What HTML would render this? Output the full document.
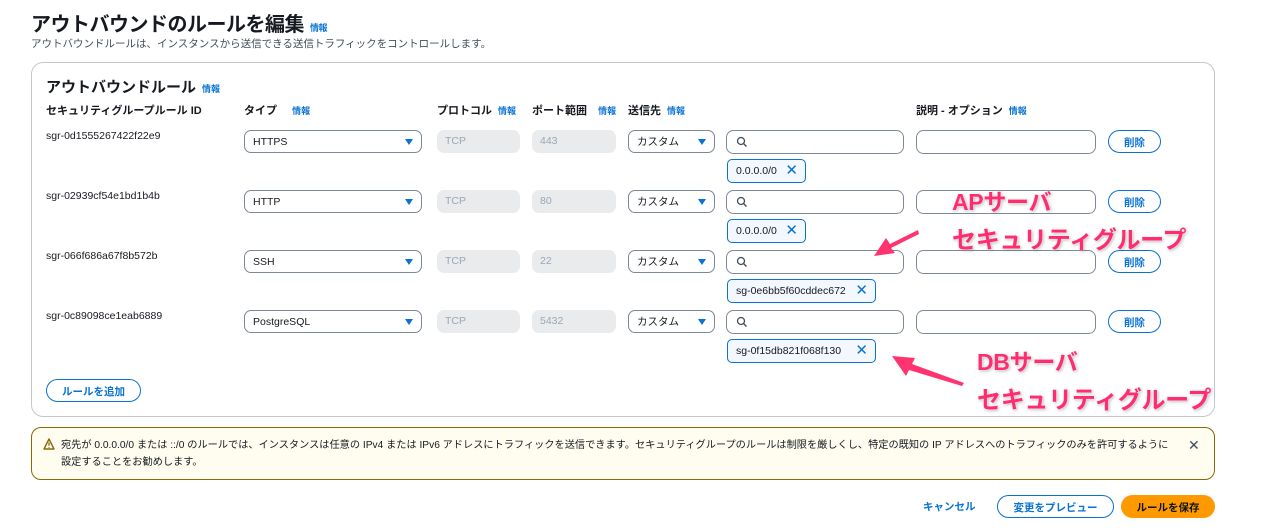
<!DOCTYPE html>
<html><head><meta charset="utf-8"><style>
*{box-sizing:border-box;margin:0;padding:0}
body{width:1271px;height:530px;background:#fff;font-family:"Liberation Sans","Noto Sans CJK JP",sans-serif;color:#16191f;position:relative;overflow:hidden}
.a{position:absolute}
.info{color:#0972d3;font-size:9px;font-weight:bold;margin-left:6px}
h1{position:absolute;left:31px;top:8px;font-size:20px;font-weight:bold;letter-spacing:-0.5px}
.sub{left:31px;top:36px;font-size:10.5px;color:#414d5c}
.box{left:31px;top:62px;width:1184px;height:355px;border:1px solid #c6c6cd;border-radius:12px}
.hd{font-size:11px;font-weight:bold;top:102px}
.id{font-size:10.5px;left:46px}
.sel{height:23px;border:1px solid #7d8998;border-radius:7px;font-size:10.5px;padding:5px 8px;line-height:12px}
.tri{position:absolute;right:8px;top:8px;width:0;height:0;border-left:4px solid transparent;border-right:4px solid transparent;border-top:6px solid #0972d3}
.dis{height:23px;background:#e9ebed;border-radius:7px;font-size:10.5px;color:#9ba7b6;padding:5px 8px;line-height:12px}
.btn{height:23px;border:1.5px solid #0972d3;border-radius:12px;color:#0972d3;font-size:10.5px;font-weight:bold;text-align:center;padding-top:4px}
.chip{height:24px;border:1px solid #0972d3;border-radius:5px;background:#f2f8fd;font-size:10.5px;padding:5px 8px;left:727px}
.chip b{color:#0972d3;font-weight:normal;font-size:15px;position:absolute;right:7px;top:1px}
.pk{color:#ff2d6f;font-weight:bold;text-shadow:0 0 2px #fff,1px 1px 3px rgba(0,0,0,.35);letter-spacing:-0.3px}
</style></head><body>
<h1>アウトバウンドのルールを編集<span class="info">情報</span></h1>
<div class="a sub">アウトバウンドルールは、インスタンスから送信できる送信トラフィックをコントロールします。</div>
<div class="a box"></div>
<div class="a" style="left:46px;top:76px;font-size:15px;font-weight:bold">アウトバウンドルール<span class="info">情報</span></div>
<div class="a hd" style="left:46px">セキュリティグループルール ID</div>
<div class="a hd" style="left:244px">タイプ <span class="info" style="margin-left:12px">情報</span></div>
<div class="a hd" style="left:437px">プロトコル<span class="info">情報</span></div>
<div class="a hd" style="left:532px">ポート範囲 <span class="info" style="margin-left:8px">情報</span></div>
<div class="a hd" style="left:628px">送信先<span class="info">情報</span></div>
<div class="a hd" style="left:916px">説明 - オプション<span class="info">情報</span></div>

<div class="a id" style="top:130px">sgr-0d1555267422f22e9</div>
<div class="a id" style="top:190px">sgr-02939cf54e1bd1b4b</div>
<div class="a id" style="top:250px">sgr-066f686a67f8b572b</div>
<div class="a id" style="top:310px">sgr-0c89098ce1eab6889</div>

<div class="a sel" style="left:244px;top:130px;width:178px">HTTPS<i class="tri"></i></div>
<div class="a sel" style="left:244px;top:190px;width:178px">HTTP<i class="tri"></i></div>
<div class="a sel" style="left:244px;top:250px;width:178px">SSH<i class="tri"></i></div>
<div class="a sel" style="left:244px;top:310px;width:178px">PostgreSQL<i class="tri"></i></div>

<div class="a dis" style="left:437px;top:130px;width:83px">TCP</div>
<div class="a dis" style="left:437px;top:190px;width:83px">TCP</div>
<div class="a dis" style="left:437px;top:250px;width:83px">TCP</div>
<div class="a dis" style="left:437px;top:310px;width:83px">TCP</div>

<div class="a dis" style="left:532px;top:130px;width:84px">443</div>
<div class="a dis" style="left:532px;top:190px;width:84px">80</div>
<div class="a dis" style="left:532px;top:250px;width:84px">22</div>
<div class="a dis" style="left:532px;top:310px;width:84px">5432</div>

<div class="a sel" style="left:628px;top:130px;width:87px">カスタム<i class="tri"></i></div>
<div class="a sel" style="left:628px;top:190px;width:87px">カスタム<i class="tri"></i></div>
<div class="a sel" style="left:628px;top:250px;width:87px">カスタム<i class="tri"></i></div>
<div class="a sel" style="left:628px;top:310px;width:87px">カスタム<i class="tri"></i></div>

<svg class="a" style="left:0;top:0" width="1271" height="530">
<g fill="none" stroke="#7d8998" stroke-width="1">
<rect x="726.5" y="130.5" width="177" height="23" rx="7"/>
<rect x="726.5" y="190.5" width="177" height="23" rx="7"/>
<rect x="726.5" y="250.5" width="177" height="23" rx="7"/>
<rect x="726.5" y="310.5" width="177" height="23" rx="7"/>
<rect x="916.5" y="130.5" width="179" height="23" rx="7"/>
<rect x="916.5" y="190.5" width="179" height="23" rx="7"/>
<rect x="916.5" y="250.5" width="179" height="23" rx="7"/>
<rect x="916.5" y="310.5" width="179" height="23" rx="7"/>
</g>
<g fill="none" stroke="#414d5c" stroke-width="1.3">
<circle cx="741" cy="141" r="3.5"/><path d="M743.5 143.5l3 3"/>
<circle cx="741" cy="201" r="3.5"/><path d="M743.5 203.5l3 3"/>
<circle cx="741" cy="261" r="3.5"/><path d="M743.5 263.5l3 3"/>
<circle cx="741" cy="321" r="3.5"/><path d="M743.5 323.5l3 3"/>
</g>
<g fill="#ff3370">
<path d="M918 230 L890 244 L886 238 L874 256 L895 253 L891 248 L919 234Z"/>
<path d="M964 383 L912 364 L915 358 L892 356 L906 376 L909 370 L962 386Z"/>
</g>
</svg>

<div class="a btn" style="left:1108px;top:130px;width:53px">削除</div>
<div class="a btn" style="left:1108px;top:190px;width:53px">削除</div>
<div class="a btn" style="left:1108px;top:250px;width:53px">削除</div>
<div class="a btn" style="left:1108px;top:310px;width:53px">削除</div>

<div class="a chip" style="top:159px;width:79px">0.0.0.0/0<b>✕</b></div>
<div class="a chip" style="top:219px;width:79px">0.0.0.0/0<b>✕</b></div>
<div class="a chip" style="top:279px;width:149px">sg-0e6bb5f60cddec672<b>✕</b></div>
<div class="a chip" style="top:339px;width:149px">sg-0f15db821f068f130<b>✕</b></div>

<div class="a btn" style="left:46px;top:379px;width:95px">ルールを追加</div>

<div class="a pk" style="left:952px;top:183px;font-size:23px">APサーバ</div>
<div class="a pk" style="left:952px;top:220px;font-size:24px">セキュリティグループ</div>
<div class="a pk" style="left:977px;top:343px;font-size:23px">DBサーバ</div>
<div class="a pk" style="left:977px;top:380px;font-size:24px">セキュリティグループ</div>

<div class="a" style="left:31px;top:427px;width:1184px;height:53px;background:#fffdf0;border:1px solid #8d6605;border-radius:10px"></div>
<svg class="a" style="left:43px;top:438px" width="12" height="12"><path d="M6 1L11 11H1Z" fill="none" stroke="#8d6605" stroke-width="1.4" stroke-linejoin="round"/><path d="M6 4.5v3.2M6 9v.8" stroke="#8d6605" stroke-width="1.3"/></svg>
<div class="a" style="left:61px;top:437px;width:1108px;font-size:10.2px;line-height:17px">宛先が 0.0.0.0/0 または ::/0 のルールでは、インスタンスは任意の IPv4 または IPv6 アドレスにトラフィックを送信できます。セキュリティグループのルールは制限を厳しくし、特定の既知の IP アドレスへのトラフィックのみを許可するように設定することをお勧めします。</div>
<div class="a" style="left:1188px;top:437px;font-size:14px;color:#414d5c">✕</div>

<div class="a" style="left:923px;top:499px;font-size:10.5px;font-weight:bold;color:#0972d3">キャンセル</div>
<div class="a btn" style="left:997px;top:495px;width:117px">変更をプレビュー</div>
<div class="a btn" style="left:1121px;top:495px;width:94px;background:#ff9900;border-color:#ff9900;color:#0f141a">ルールを保存</div>
</body></html>
